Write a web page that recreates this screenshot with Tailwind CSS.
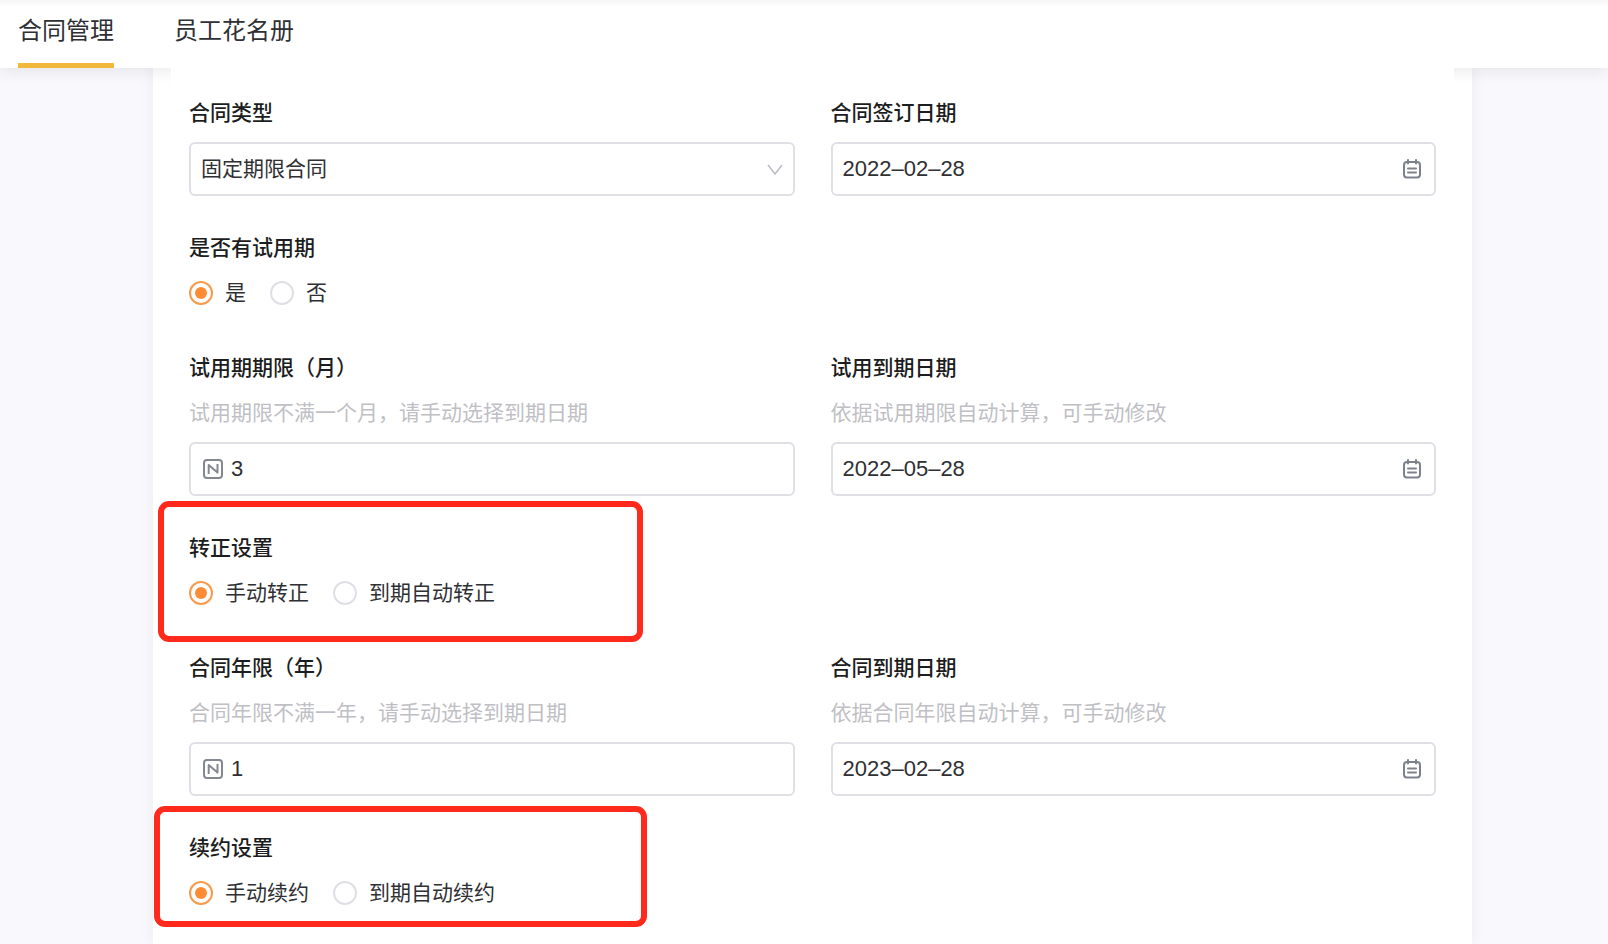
<!DOCTYPE html>
<html lang="zh-CN">
<head>
<meta charset="utf-8">
<title>合同管理</title>
<script src="https://cdn.jsdelivr.net/npm/@tailwindcss/browser@4"></script>
</head>
<body class="flex h-screen flex-col overflow-hidden bg-[#f9f9fd] font-['Liberation_Sans','Noto_Sans_CJK_SC',sans-serif] text-[21px] leading-8 text-[#2f3034]">

<svg class="hidden" aria-hidden="true">
  <symbol id="calendar" viewBox="0 0 20 22" fill="none" stroke="#7c828c" stroke-width="2" stroke-linecap="round">
    <rect x="2" y="4" width="16" height="15.5" rx="3"/>
    <path d="M6 2v3.5M14 2v3.5M6 10.5h8M6 14.5h8"/>
  </symbol>
  <symbol id="number" viewBox="0 0 20 20" fill="none" stroke="#83878f" stroke-width="2" stroke-linejoin="round">
    <rect x="1" y="1" width="18" height="18" rx="3"/>
    <path d="M5.7 15V6l8.8 7.6V5"/>
  </symbol>
</svg>

<header class="relative z-10 h-17 shrink-0 bg-linear-to-b from-[#f5f5f5] to-white to-10% shadow-[0_4px_14px_rgba(0,0,0,0.08)]">
  <nav class="flex h-full gap-15 pl-[18px] text-2xl">
    <a href="#contracts" class="flex h-full items-start border-b-5 border-[#f2b83c] pt-[15px]" aria-current="page">合同管理</a>
    <a href="#roster" class="flex h-full items-start pt-[15px]">员工花名册</a>
  </nav>
</header>

<main class="mr-[136px] ml-[153px] flex-1 bg-white px-[18px] shadow-[0_0_14px_rgba(0,0,0,0.06)]">
  <form class="relative z-20 grid h-full grid-cols-2 content-start gap-9 bg-white px-[18px] pt-[29px]">

    <div class="flex flex-col gap-[13px]">
      <label for="type" class="font-medium text-[#1c1d20]">合同类型</label>
      <div class="relative">
        <select id="type" class="h-[54px] w-full appearance-none rounded-md border-2 border-[#dfe0e5] bg-white px-[10px]">
          <option>固定期限合同</option>
        </select>
        <svg class="pointer-events-none absolute top-[22px] right-3 h-3 w-4" viewBox="0 0 16 12" fill="none" stroke="#bcbec6" stroke-width="1.6"><path d="M1 1l7 9 7-9"/></svg>
      </div>
    </div>
    <div class="flex flex-col gap-[13px]">
      <label for="signed" class="font-medium text-[#1c1d20]">合同签订日期</label>
      <div class="flex h-[54px] items-center rounded-md border-2 border-[#dfe0e5] pr-3 pl-[10px]">
        <input id="signed" type="text" value="2022–02–28" class="min-w-0 flex-1 text-[22px] outline-none">
        <svg class="h-[22px] w-5"><use href="#calendar"/></svg>
      </div>
    </div>

    <div class="col-span-2 pb-[7px]">
      <fieldset>
        <legend class="mb-[13px] font-medium text-[#1c1d20]">是否有试用期</legend>
        <div class="flex gap-6">
          <label class="flex items-center gap-3"><input type="radio" name="trial" checked class="size-6 appearance-none rounded-full border-2 border-[#dfe0e5] bg-white bg-clip-content p-1 checked:border-[#f79a4b] checked:bg-[#fd8c35]">是</label>
          <label class="flex items-center gap-3"><input type="radio" name="trial" class="size-6 appearance-none rounded-full border-2 border-[#dfe0e5] bg-white bg-clip-content p-1 checked:border-[#f79a4b] checked:bg-[#fd8c35]">否</label>
        </div>
      </fieldset>
    </div>

    <div class="flex flex-col gap-[13px]">
      <label for="months" class="font-medium text-[#1c1d20]">试用期期限（月）</label>
      <p class="text-[#c0bfc5]">试用期限不满一个月，请手动选择到期日期</p>
      <div class="flex h-[54px] items-center gap-2 rounded-md border-2 border-[#dfe0e5] px-3">
        <svg class="size-5"><use href="#number"/></svg>
        <input id="months" type="text" value="3" class="min-w-0 flex-1 text-[22px] outline-none">
      </div>
    </div>
    <div class="flex flex-col gap-[13px]">
      <label for="trial-end" class="font-medium text-[#1c1d20]">试用到期日期</label>
      <p class="text-[#c0bfc5]">依据试用期限自动计算，可手动修改</p>
      <div class="flex h-[54px] items-center rounded-md border-2 border-[#dfe0e5] pr-3 pl-[10px]">
        <input id="trial-end" type="text" value="2022–05–28" class="min-w-0 flex-1 text-[22px] outline-none">
        <svg class="h-[22px] w-5"><use href="#calendar"/></svg>
      </div>
    </div>

    <div class="relative col-span-2 pb-[7px]">
      <div class="pointer-events-none absolute -top-[31px] -left-[31px] h-[141px] w-[485px] rounded-[11px] border-6 border-[#ff2a1c]"></div>
      <fieldset>
        <legend class="mb-[13px] font-medium text-[#1c1d20]">转正设置</legend>
        <div class="flex gap-6">
          <label class="flex items-center gap-3"><input type="radio" name="regular" checked class="size-6 appearance-none rounded-full border-2 border-[#dfe0e5] bg-white bg-clip-content p-1 checked:border-[#f79a4b] checked:bg-[#fd8c35]">手动转正</label>
          <label class="flex items-center gap-3"><input type="radio" name="regular" class="size-6 appearance-none rounded-full border-2 border-[#dfe0e5] bg-white bg-clip-content p-1 checked:border-[#f79a4b] checked:bg-[#fd8c35]">到期自动转正</label>
        </div>
      </fieldset>
    </div>

    <div class="flex flex-col gap-[13px]">
      <label for="years" class="font-medium text-[#1c1d20]">合同年限（年）</label>
      <p class="text-[#c0bfc5]">合同年限不满一年，请手动选择到期日期</p>
      <div class="flex h-[54px] items-center gap-2 rounded-md border-2 border-[#dfe0e5] px-3">
        <svg class="size-5"><use href="#number"/></svg>
        <input id="years" type="text" value="1" class="min-w-0 flex-1 text-[22px] outline-none">
      </div>
    </div>
    <div class="flex flex-col gap-[13px]">
      <label for="contract-end" class="font-medium text-[#1c1d20]">合同到期日期</label>
      <p class="text-[#c0bfc5]">依据合同年限自动计算，可手动修改</p>
      <div class="flex h-[54px] items-center rounded-md border-2 border-[#dfe0e5] pr-3 pl-[10px]">
        <input id="contract-end" type="text" value="2023–02–28" class="min-w-0 flex-1 text-[22px] outline-none">
        <svg class="h-[22px] w-5"><use href="#calendar"/></svg>
      </div>
    </div>

    <div class="relative col-span-2">
      <div class="pointer-events-none absolute -top-[26px] -left-[35px] h-[121px] w-[493px] rounded-[11px] border-6 border-[#ff2a1c]"></div>
      <fieldset>
        <legend class="mb-[13px] font-medium text-[#1c1d20]">续约设置</legend>
        <div class="flex gap-6">
          <label class="flex items-center gap-3"><input type="radio" name="renew" checked class="size-6 appearance-none rounded-full border-2 border-[#dfe0e5] bg-white bg-clip-content p-1 checked:border-[#f79a4b] checked:bg-[#fd8c35]">手动续约</label>
          <label class="flex items-center gap-3"><input type="radio" name="renew" class="size-6 appearance-none rounded-full border-2 border-[#dfe0e5] bg-white bg-clip-content p-1 checked:border-[#f79a4b] checked:bg-[#fd8c35]">到期自动续约</label>
        </div>
      </fieldset>
    </div>
  </form>
</main>
</body>
</html>
